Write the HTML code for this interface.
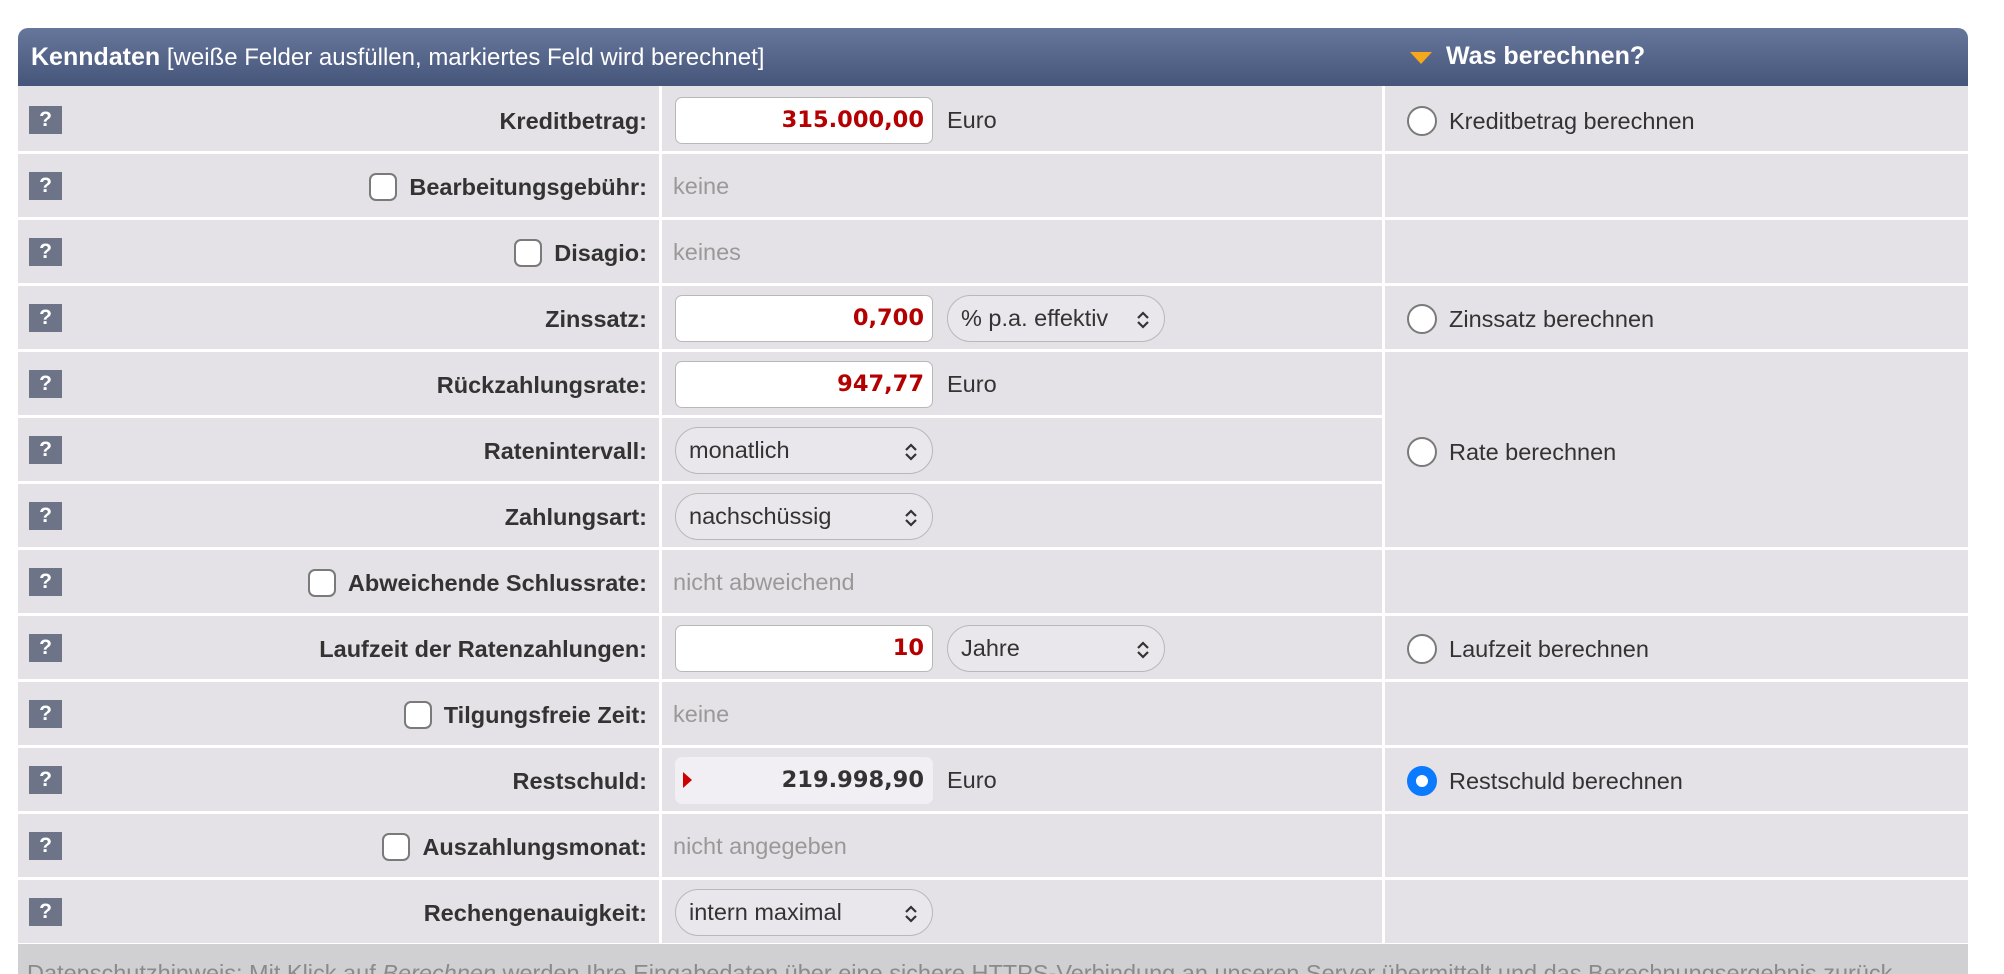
<!DOCTYPE html>
<html><head><meta charset="utf-8"><style>
*{margin:0;padding:0;box-sizing:border-box}
body{width:2004px;height:970px;background:#fff;position:relative;overflow:hidden;font-family:"Liberation Sans",Arial,sans-serif;color:#333}
.hdr{position:absolute;left:18px;top:28px;width:1950px;height:58px;border-radius:10px 10px 0 0;background:linear-gradient(#67769b,#46557a);color:#fff;font-size:24px}
.hdr .l{position:absolute;left:13px;top:15px}
.hdr .r{position:absolute;left:1428px;top:14px;font-weight:bold;font-size:25px}
.tri{position:absolute;left:1392px;top:24px;width:0;height:0;border-left:11px solid transparent;border-right:11px solid transparent;border-top:12px solid #f5a81c}
.tbl{position:absolute;left:18px;top:86px;width:1950px;height:858px;background:#e4e2e6}
.hl{position:absolute;height:3px;background:#fff}
.vl{position:absolute;width:3px;background:#fff;top:86px;height:858px}
.q{position:absolute;left:29px;width:33px;height:28px;background:#6d7487;color:#fff;font-weight:bold;font-size:21px;text-align:center;line-height:28px}
.lab{position:absolute;right:1357px;font-weight:bold;font-size:23.5px;line-height:28px;display:flex;align-items:center;white-space:nowrap}
.cb{display:inline-block;width:28px;height:28px;border:2px solid #7a7a7a;border-radius:7px;background:#fff;margin-right:12px}
.inp{position:absolute;left:675px;width:258px;height:47px;background:#fff;border:1px solid #b8b8b8;border-radius:7px;color:#b40000;font-family:"DejaVu Sans",sans-serif;font-weight:bold;font-size:22.5px;text-align:right;padding-right:8px;line-height:45px}
.sel{position:absolute;height:47px;background:#e9e7eb;border:1px solid #b8b8b8;border-radius:24px;font-size:23.5px;line-height:45px;padding-left:13px}
.sel svg{position:absolute;right:14px;top:15px}
.txt{position:absolute;font-size:23.5px;line-height:26px}
.gr{position:absolute;left:673px;font-size:23.5px;color:#999;line-height:26px}
.rad{position:absolute;left:1407px;width:30px;height:30px;border:2px solid #7a7a7a;border-radius:50%;background:#fff}
.rtx{position:absolute;left:1449px;font-size:23.5px;line-height:26px}
.foot{position:absolute;left:18px;top:944px;width:1950px;height:30px;background:#d0cfd2;color:#8a8a8a;font-size:23.5px;padding-left:9px;padding-top:16px;white-space:nowrap;overflow:hidden}
</style></head><body>
<div class="hdr"><div class="l"><b style="font-size:25px">Kenndaten</b> [weiße Felder ausfüllen, markiertes Feld wird berechnet]</div><div class="tri"></div><div class="r">Was berechnen?</div></div>
<div class="tbl"></div>
<div class="hl" style="left:18px;top:151px;width:1950px"></div>
<div class="hl" style="left:18px;top:217px;width:1950px"></div>
<div class="hl" style="left:18px;top:283px;width:1950px"></div>
<div class="hl" style="left:18px;top:349px;width:1950px"></div>
<div class="hl" style="left:18px;top:415px;width:1366px"></div>
<div class="hl" style="left:18px;top:481px;width:1366px"></div>
<div class="hl" style="left:18px;top:547px;width:1950px"></div>
<div class="hl" style="left:18px;top:613px;width:1950px"></div>
<div class="hl" style="left:18px;top:679px;width:1950px"></div>
<div class="hl" style="left:18px;top:745px;width:1950px"></div>
<div class="hl" style="left:18px;top:811px;width:1950px"></div>
<div class="hl" style="left:18px;top:877px;width:1950px"></div>
<div class="hl" style="left:18px;top:943px;width:1950px"></div>
<div class="vl" style="left:659px"></div>
<div class="vl" style="left:1382px"></div>

<div class="q" style="top:106px">?</div>
<div class="q" style="top:172px">?</div>
<div class="q" style="top:238px">?</div>
<div class="q" style="top:304px">?</div>
<div class="q" style="top:370px">?</div>
<div class="q" style="top:436px">?</div>
<div class="q" style="top:502px">?</div>
<div class="q" style="top:568px">?</div>
<div class="q" style="top:634px">?</div>
<div class="q" style="top:700px">?</div>
<div class="q" style="top:766px">?</div>
<div class="q" style="top:832px">?</div>
<div class="q" style="top:898px">?</div>

<div class="lab" style="top:107px">Kreditbetrag:</div>
<div class="lab" style="top:173px"><span class="cb"></span>Bearbeitungsgebühr:</div>
<div class="lab" style="top:239px"><span class="cb"></span>Disagio:</div>
<div class="lab" style="top:305px">Zinssatz:</div>
<div class="lab" style="top:371px">Rückzahlungsrate:</div>
<div class="lab" style="top:437px">Ratenintervall:</div>
<div class="lab" style="top:503px">Zahlungsart:</div>
<div class="lab" style="top:569px"><span class="cb"></span>Abweichende Schlussrate:</div>
<div class="lab" style="top:635px">Laufzeit der Ratenzahlungen:</div>
<div class="lab" style="top:701px"><span class="cb"></span>Tilgungsfreie Zeit:</div>
<div class="lab" style="top:767px">Restschuld:</div>
<div class="lab" style="top:833px"><span class="cb"></span>Auszahlungsmonat:</div>
<div class="lab" style="top:899px">Rechengenauigkeit:</div>

<div class="inp" style="top:97px">315.000,00</div><div class="txt" style="left:947px;top:107px">Euro</div>
<div class="gr" style="top:173px">keine</div>
<div class="gr" style="top:239px">keines</div>
<div class="inp" style="top:295px">0,700</div>
<div class="sel" style="left:947px;top:295px;width:218px">% p.a. effektiv<svg width="14" height="18" viewBox="0 0 14 18"><path d="M2 7L7 2L12 7M2 11L7 16L12 11" fill="none" stroke="#333" stroke-width="2.2"/></svg></div>
<div class="inp" style="top:361px">947,77</div><div class="txt" style="left:947px;top:371px">Euro</div>
<div class="sel" style="left:675px;top:427px;width:258px">monatlich<svg width="14" height="18" viewBox="0 0 14 18"><path d="M2 7L7 2L12 7M2 11L7 16L12 11" fill="none" stroke="#333" stroke-width="2.2"/></svg></div>
<div class="sel" style="left:675px;top:493px;width:258px">nachschüssig<svg width="14" height="18" viewBox="0 0 14 18"><path d="M2 7L7 2L12 7M2 11L7 16L12 11" fill="none" stroke="#333" stroke-width="2.2"/></svg></div>
<div class="gr" style="top:569px">nicht abweichend</div>
<div class="inp" style="top:625px">10</div>
<div class="sel" style="left:947px;top:625px;width:218px">Jahre<svg width="14" height="18" viewBox="0 0 14 18"><path d="M2 7L7 2L12 7M2 11L7 16L12 11" fill="none" stroke="#333" stroke-width="2.2"/></svg></div>
<div class="gr" style="top:701px">keine</div>
<div class="inp" style="top:757px;background:#f1eff3;border-color:#f1eff3;color:#333">219.998,90</div>
<div style="position:absolute;left:683px;top:772px;width:0;height:0;border-top:8px solid transparent;border-bottom:8px solid transparent;border-left:9px solid #c00"></div>
<div class="txt" style="left:947px;top:767px">Euro</div>
<div class="gr" style="top:833px">nicht angegeben</div>
<div class="sel" style="left:675px;top:889px;width:258px">intern maximal<svg width="14" height="18" viewBox="0 0 14 18"><path d="M2 7L7 2L12 7M2 11L7 16L12 11" fill="none" stroke="#333" stroke-width="2.2"/></svg></div>

<div class="rad" style="top:106px"></div><div class="rtx" style="top:108px">Kreditbetrag berechnen</div>
<div class="rad" style="top:304px"></div><div class="rtx" style="top:306px">Zinssatz berechnen</div>
<div class="rad" style="top:437px"></div><div class="rtx" style="top:439px">Rate berechnen</div>
<div class="rad" style="top:634px"></div><div class="rtx" style="top:636px">Laufzeit berechnen</div>
<div class="rad" style="top:766px;border:9px solid #0a7aff"></div><div class="rtx" style="top:768px">Restschuld berechnen</div>

<div class="foot">Datenschutzhinweis: Mit Klick auf <i>Berechnen</i> werden Ihre Eingabedaten über eine sichere HTTPS-Verbindung an unseren Server übermittelt und das Berechnungsergebnis zurück</div>
</body></html>
